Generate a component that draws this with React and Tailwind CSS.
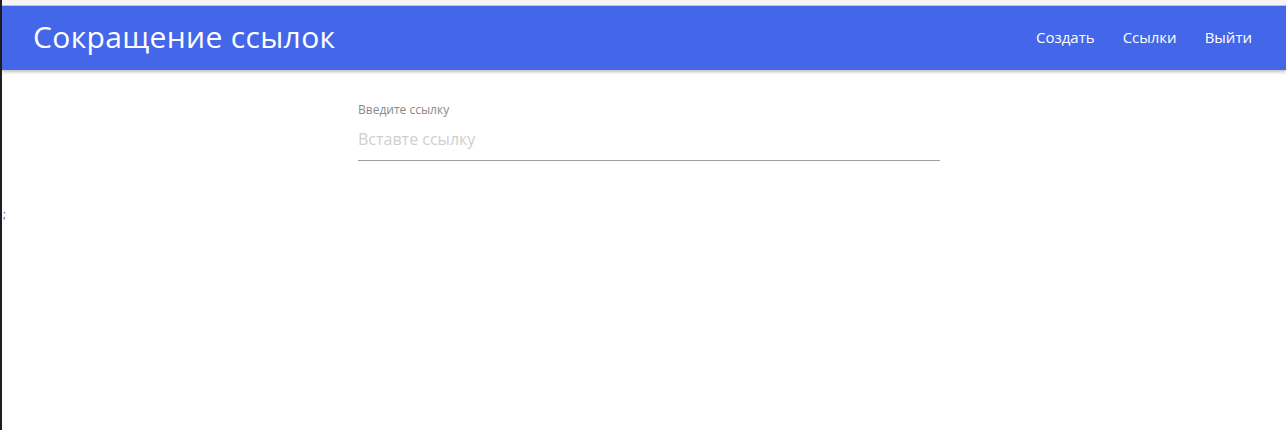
export default function App() {
  return (
    <div className="flex min-h-[430px] w-full" style={{ fontFamily: '"Open Sans", "Noto Sans", sans-serif' }}>
      <div className="w-[2px] shrink-0 bg-[#1e1e1e]" />
      <div className="flex-1 flex flex-col bg-white">
        <div className="h-[6px] bg-[#f5f5f5] border-b border-[#c9c9c9]" />
        <nav className="h-[64px] bg-[#4466e9] flex items-center justify-between pl-[31px] pr-[20px] shadow-[0_2px_3px_rgba(0,0,0,0.25)] relative z-10">
          <span className="text-white text-[30px] leading-none tracking-[0.35px] -mt-[2px]">Сокращение ссылок</span>
          <div className="flex items-center text-white text-[15px] -mt-[2px]">
            <a className="px-[14px]">Создать</a>
            <a className="px-[14px]">Ссылки</a>
            <a className="px-[14px]">Выйти</a>
          </div>
        </nav>
        <div className="flex">
          <div className="w-[356px] shrink-0 relative">
            <span className="absolute left-[1px] top-[138px] text-[11px] text-[#3b4a8a] leading-none">;</span>
          </div>
          <div className="w-[582px] pt-[34px]">
            <label className="block text-[12px] text-[#8a8a8a] leading-none">Введите ссылку</label>
            <input
              className="mt-[6px] w-full h-[39px] border-b border-[#9e9e9e] outline-none text-[16px] text-[#333] placeholder:text-[#cfcfcf] bg-transparent pb-[5px]"
              placeholder="Вставте ссылку"
            />
          </div>
        </div>
      </div>
    </div>
  );
}
